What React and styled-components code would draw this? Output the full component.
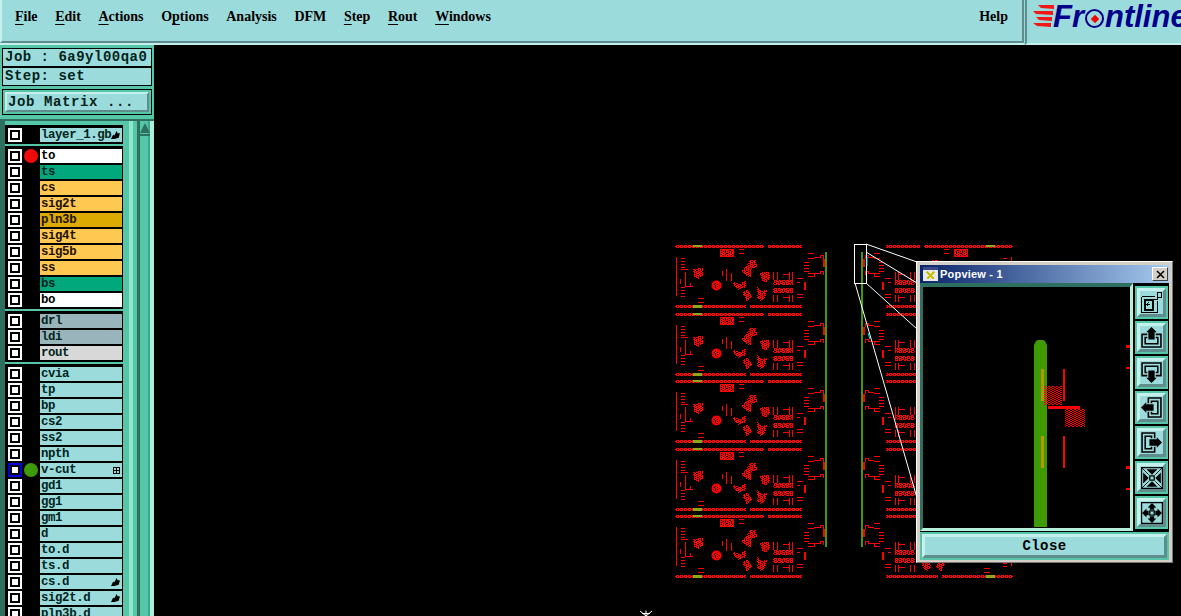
import React from "react";
import styled, { createGlobalStyle } from "styled-components";

const TEAL = "#9cdbdb";
const GREEN = "#55c6a8";
const DARK = "#2f6f5f";
const LIGHT = "#c6f0ec";
const INK = "#01241c";
const MONO = `"Liberation Mono", "DejaVu Sans Mono", monospace`;

const GlobalStyle = createGlobalStyle`
    html, body {
        margin: 0;
        background: #000;
        overflow: hidden;
    }
    *, *::before, *::after { box-sizing: border-box; }
`;

const Screen = styled.div`
    width: 1181px;
    height: 616px;
    display: flex;
    flex-direction: column;
    overflow: hidden;
    background: #000;
`;

/* top bar */
const TopBar = styled.div`
    height: 45px;
    flex: none;
    display: flex;
    background: ${TEAL};
`;

const MenuPanel = styled.div`
    width: 1024px;
    display: flex;
    justify-content: space-between;
    padding: 8px 14px 0 15px;
    border-left: 2px solid ${LIGHT};
    border-right: 2px solid #5f8d8d;
    border-bottom: 2px solid #5f8d8d;
    margin-bottom: 2px;
    box-shadow: 0 2px 0 ${LIGHT};
`;

const MenuList = styled.div`
    display: flex;
    gap: 17.6px;
    margin-left: -2px;
`;

const MenuItem = styled.span`
    font: bold 14px/17px "Liberation Serif", serif;
    color: #000;
`;

const Mnemonic = styled.span`
    text-decoration: underline;
    text-decoration-thickness: 1px;
    text-underline-offset: 3px;
`;

const LogoPanel = styled.div`
    flex: 1;
    margin-left: 1px;
    border-left: 2px solid #5f8d8d;
    border-bottom: 2px solid ${LIGHT};
    display: flex;
    align-items: flex-start;
    padding: 5px 0 0 6px;
    overflow: hidden;
`;

const LogoWord = styled.span`
    font: italic bold 31px/23px "Liberation Sans", sans-serif;
    color: #00008b;
    white-space: nowrap;
    display: flex;
    align-items: flex-end;
    margin-left: -1px;
`;

const LogoRing = styled.span`
    width: 19px;
    height: 19px;
    margin: 0 1px 0 1px;
    border: 2px solid #00008b;
    border-radius: 50%;
    display: flex;
    align-items: center;
    justify-content: center;

    &::after {
        content: "";
        width: 6px;
        height: 6px;
        background: #f00;
        transform: rotate(45deg);
    }
`;

/* body */
const Main = styled.div`
    flex: 1;
    min-height: 0;
    display: flex;
`;

const Sidebar = styled.div`
    width: 154px;
    flex: none;
    display: flex;
    flex-direction: column;
    background: ${GREEN};
    overflow: hidden;
    padding-top: 3px;
`;

const InfoBox = styled.div`
    height: 19px;
    margin: 0 2px 0 2px;
    padding-left: 2px;
    background: ${TEAL};
    border: 1px solid #000;
    font: bold 14px/17px ${MONO};
    letter-spacing: 0.5px;
    color: ${INK};
    white-space: nowrap;
`;

const MatrixBox = styled.div`
    margin: 3px 2px 4px;
    height: 26px;
    padding: 2px;
    border: 1px solid #000;
`;

const MatrixButton = styled.div`
    height: 20px;
    background: ${TEAL};
    border: 2px solid;
    border-color: ${LIGHT} #5f8d8d #5f8d8d ${LIGHT};
    font: bold 14px/16px ${MONO};
    letter-spacing: 0.6px;
    padding-left: 1px;
    color: ${INK};
`;

const ListArea = styled.div`
    flex: 1;
    min-height: 0;
    display: flex;
    border-top: 2px solid ${DARK};
`;

const LayerColumn = styled.div`
    width: 123px;
    flex: none;
    display: flex;
    flex-direction: column;
    gap: 2px;
    padding-top: 4px;
    border-left: 5px solid ${DARK};
`;

const LayerGroup = styled.div`
    background: #000;
    padding-top: 3px;
`;

const Row = styled.div`
    height: 16px;
    display: flex;
    padding-left: 3px;
`;

const CheckBox = styled.span`
    width: 14px;
    height: 14px;
    flex: none;
    background: ${(p) => (p.$active ? "#0000e0" : "#fff")};
    display: flex;
    align-items: center;
    justify-content: center;

    &::after {
        content: "";
        width: 10px;
        height: 10px;
        background: #fff;
        border: 2px solid #000;
    }
`;

const Dot = styled.span`
    width: 14px;
    height: 14px;
    margin: 0 2px 0 2px;
    flex: none;
    border-radius: 50%;
    background: ${(p) => p.$color || "transparent"};
`;

const Label = styled.span`
    width: 82px;
    height: 14px;
    flex: none;
    display: flex;
    justify-content: space-between;
    align-items: center;
    padding: 0 1px 0 1px;
    background: ${(p) => p.$bg || TEAL};
    color: ${(p) => p.$ink || INK};
    font: bold 12.4px/14px ${MONO};
    letter-spacing: -0.4px;
    white-space: nowrap;
    overflow: hidden;
`;

const ScrollTrack = styled.div`
    flex: 1;
    position: relative;
    background: linear-gradient(90deg,
        ${GREEN} 0 6px, #8fe6cc 6px 10px, ${GREEN} 10px 14px, ${DARK} 14px 17px,
        ${GREEN} 17px 25px, #3fa68c 25px 27px, #a8f0dc 27px 31px);
`;

const ScrollCap = styled.div`
    position: absolute;
    left: 17px;
    top: 1px;
    width: 10px;
    height: 14px;
    border-bottom: 2px solid ${DARK};

    &::after {
        content: "";
        position: absolute;
        left: 0;
        top: 1px;
        border-left: 5px solid transparent;
        border-right: 5px solid transparent;
        border-bottom: 10px solid ${DARK};
    }
`;

/* canvas */
const Canvas = styled.div`
    flex: 1;
    position: relative;
    background: #000;
`;

const BoardArt = styled.svg`
    display: block;
    width: 100%;
    height: 100%;
`;

const Popview = styled.div`
    position: absolute;
    left: 762px;
    top: 216px;
    width: 257px;
    height: 302px;
    padding: 3px;
    background: #d4d0c8;
    border: 1px solid;
    border-color: #fff #777 #777 #fff;
    display: flex;
    flex-direction: column;
`;

const TitleBar = styled.div`
    height: 18px;
    flex: none;
    display: flex;
    align-items: center;
    padding: 0 1px 0 3px;
    gap: 2px;
    background: linear-gradient(90deg, #0a246a, #a6caf0);
`;

const TitleText = styled.span`
    flex: 1;
    font: bold 11px/18px "Liberation Sans", sans-serif;
    letter-spacing: 0.2px;
    color: #fff;
`;

const WinClose = styled.span`
    width: 16px;
    height: 14px;
    background: #d4d0c8;
    border: 1px solid;
    border-color: #fff #404040 #404040 #fff;
    display: flex;
    align-items: center;
    justify-content: center;
`;

const PopBody = styled.div`
    flex: 1;
    min-height: 0;
    display: flex;
    flex-direction: column;
    background: #000;
`;

const ViewRow = styled.div`
    height: 248px;
    flex: none;
    display: flex;
`;

const ViewFrame = styled.div`
    width: 213px;
    flex: none;
    background: #000;
    border-style: solid;
    border-width: 4px 3px 3px 3px;
    border-color: ${DARK} #b8f0e0 #b8f0e0 ${DARK};
`;

const ToolColumn = styled.div`
    display: flex;
    flex-direction: column;
    gap: 2px;
    padding: 3px 0 0 2px;
`;

const ToolButton = styled.div`
    width: 33px;
    height: 33px;
    border: 2px solid ${GREEN};
    background: ${TEAL};
`;

const ToolFace = styled.div`
    width: 100%;
    height: 100%;
    border: 3px solid;
    border-color: ${LIGHT} #5f8d8d #5f8d8d ${LIGHT};
    display: flex;
    align-items: center;
    justify-content: center;
`;

const CloseWrap = styled.div`
    flex: 1;
    margin-top: 1px;
    padding: 2px;
    background: ${GREEN};
`;

const CloseButton = styled.div`
    height: 100%;
    background: ${TEAL};
    border: 3px solid;
    border-color: ${LIGHT} #5f8d8d #5f8d8d ${LIGHT};
    text-align: center;
    font: bold 14px/18px ${MONO};
    letter-spacing: 0.4px;
    color: #000;
`;

const ORANGE = "#ffc850";
const SEA = "#00a87c";

const groups = [
    [{ name: "layer_1.gb", mark: true }],
    [
        { name: "to", bg: "#fff", ink: "#000", dot: "#f00a0a" },
        { name: "ts", bg: SEA },
        { name: "cs", bg: ORANGE, ink: "#210" },
        { name: "sig2t", bg: ORANGE, ink: "#210" },
        { name: "pln3b", bg: "#dcaa00", ink: "#210" },
        { name: "sig4t", bg: ORANGE, ink: "#210" },
        { name: "sig5b", bg: ORANGE, ink: "#210" },
        { name: "ss", bg: ORANGE, ink: "#210" },
        { name: "bs", bg: SEA },
        { name: "bo", bg: "#fff", ink: "#000" },
    ],
    [
        { name: "drl", bg: "#9ab4bc" },
        { name: "ldi", bg: "#9ab4bc" },
        { name: "rout", bg: "#d8d8d8" },
    ],
    [
        { name: "cvia" }, { name: "tp" }, { name: "bp" }, { name: "cs2" }, { name: "ss2" },
        { name: "npth" },
        { name: "v-cut", dot: "#3f9a0a", active: true, grid: true },
        { name: "gd1" }, { name: "gg1" }, { name: "gm1" }, { name: "d" },
        { name: "to.d" }, { name: "ts.d" },
        { name: "cs.d", mark: true }, { name: "sig2t.d", mark: true }, { name: "pln3b.d" },
    ],
];

function HandMark() {
    return (
        <svg width="10" height="10" viewBox="0 0 9 9" style={{ flex: "none" }}>
            <path d="M0 8 L2 4 L3 5 L5 1 L6 3 L8 3 L7 7 L3 8 Z" fill="#000" />
        </svg>
    );
}

function GridMark() {
    return (
        <svg width="7" height="7" viewBox="0 0 7 7" style={{ marginRight: 1 }} shapeRendering="crispEdges">
            <path d="M.5.5h6v6h-6zM3.5 1v5M1 3.5h5" fill="none" stroke="#000" />
        </svg>
    );
}

// stipple is drawn cell by cell, svg patterns blur at odd offsets
const brick = (x, y, fill = 3) => (x + y * 2) % 4 < fill;
const cell = (x, y) => `M${x} ${y}h1v1h-1z`;

function hatchRect(x, y, w, h, fill) {
    let d = "";
    for (let j = y; j < y + h; j++) {
        for (let i = x; i < x + w; i++) {
            if (brick(i, j, fill)) d += cell(i, j);
        }
    }
    return d;
}

function inside(pts, x, y) {
    let hit = false;
    for (let i = 0, j = pts.length - 1; i < pts.length; j = i++) {
        const [xa, ya] = pts[i];
        const [xb, yb] = pts[j];
        if (ya > y !== yb > y && x < ((xb - xa) * (y - ya)) / (yb - ya) + xa) hit = !hit;
    }
    return hit;
}

function hatchPoly(pts) {
    let d = "";
    for (let j = 0; j < 72; j++) {
        for (let i = 0; i < 160; i++) {
            if (brick(i, j) && (i * 7 + j * 13) % 11 !== 0 && inside(pts, i + 0.5, j + 0.5)) d += cell(i, j);
        }
    }
    return d;
}

// one board, coords from the panel's top left corner (670,240)
const blobs = [
    [[23, 29], [33, 28], [33, 36], [28, 39], [24, 37]],
    [[76, 27], [80, 20], [86, 20], [87, 27], [81, 29], [81, 37], [76, 36], [72, 31]],
    [[90, 33], [99, 31], [100, 39], [96, 43], [92, 41]],
    [[63, 42], [70, 44], [76, 40], [76, 47], [69, 50], [64, 46]],
    [[73, 51], [78, 50], [82, 56], [77, 62], [75, 56], [73, 55]],
    [[87, 46], [92, 51], [97, 50], [95, 58], [91, 62], [87, 57]],
    [[103, 40], [123, 40], [123, 45], [103, 45]],
    [[103, 48], [123, 48], [123, 53], [103, 53]],
    [[51, 10], [63, 10], [63, 16], [51, 16]],
    [[43, 42], [50, 42], [50, 49], [43, 49]],
];

const boardStipple =
    hatchRect(5, 5, 89, 3) + hatchRect(98, 5, 34, 3) + hatchRect(5, 65, 71, 3) + hatchRect(80, 65, 52, 3) +
    blobs.map(hatchPoly).join("");

const boardLines =
    "M6.5 17V56 M11 18.5h4 M11 21.5h4 M11 24.5h4 M11 27.5h4 M11 47.5h4 M11 50.5h4 M11 53.5h4 M11 56.5h4" +
    " M11 29.5h7 M15.5 32v14h5v-3 M17 46.5h6 M10.5 39v5" +
    " M52.5 31v5 M56.5 29v12 M61.5 33v8" +
    " M103.5 32v8 M107.5 32v8 M119.5 32v8 M122.5 32v8 M103.5 55v7 M107.5 55v7 M119.5 55v7 M122.5 55v7 M113 34.5h6 M113 57.5h6" +
    " M28 58.5h6 M28 62.5h6 M69 9.5h5 M69 13.5h5" +
    " M134 22.5h5 M134 25.5h5 M134 28.5h5 M134 31.5h5 M138 13.5h6 M138 18.5h6 M144 17.5h6v-2h3v3" +
    " M138 33.5h6 M138 36.5h6v-3h6v-2h3v3 M127 38.5h6 M127 42.5h3 M127 54.5h6 M127 57.5h6";

const thickLines = "M154 19v8 M135 42v8";

function Board({ y }) {
    return (
        <g transform={`translate(670 ${y})`} shapeRendering="crispEdges">
            <path d={boardStipple} fill="#f00" />
            <rect x="23" y="5" width="9" height="2" fill="#8aa81c" />
            <rect x="23" y="65" width="9" height="3" fill="#8aa81c" />
            <path d="M50.5 9.5h13v7h-13z" fill="none" stroke="#f00" />
            <path d={boardLines} fill="none" stroke="#f00" />
            <path d={thickLines} fill="none" stroke="#f00" strokeWidth="2" />
            <circle cx="46.5" cy="45.5" r="4" fill="none" stroke="#f00" strokeWidth="2" shapeRendering="auto" />
        </g>
    );
}

const boardRows = [240, 308, 375, 443, 510];

function BoardSide() {
    return (
        <>
            {boardRows.map((y) => (
                <Board key={y} y={y} />
            ))}
            <rect x="825" y="252" width="2" height="295" fill="#3f9a0a" shapeRendering="crispEdges" />
        </>
    );
}

function CadView() {
    return (
        <BoardArt viewBox="154 45 1027 571">
            <BoardSide />
            <g transform="translate(1688 0) scale(-1 1)">
                <BoardSide />
            </g>
            <g fill="none" stroke="#fff">
                <path d="M854.5 244.5h12v39h-12z" shapeRendering="crispEdges" />
                <path d="M866 244 L917 262 M866 252 L917 283 M866 283 L917 329 M855 283 L917 498" />
            </g>
            <path d="M867 257v9 M868 333l2 6" stroke="#0ee" fill="none" />
            <path d="M646 610.5v6 M640 611l6 5 M652 611l-6 5 M642 613.5h8" stroke="#fff" fill="none" />
        </BoardArt>
    );
}

const popStipple = hatchRect(1044, 386, 18, 19, 2) + hatchRect(1065, 409, 20, 18, 2);

function PopArt() {
    return (
        <BoardArt viewBox="923 287 207 241">
            <path d="M1034 527V345l2-4 2-1h5l2 1 2 4V527Z" fill="#3f9a00" />
            <g shapeRendering="crispEdges">
                <path d={popStipple} fill="#f00" />
                <rect x="1041" y="369" width="3" height="32" fill="#b09a00" />
                <rect x="1041" y="436" width="3" height="32" fill="#b09a00" />
                <rect x="1063" y="369" width="2" height="32" fill="#f00" />
                <rect x="1063" y="436" width="2" height="32" fill="#f00" />
                <rect x="1048" y="406" width="32" height="3" fill="#f00" />
                <rect x="1126" y="345" width="4" height="3" fill="#f00" />
                <rect x="1126" y="367" width="4" height="2" fill="#f00" />
                <rect x="1126" y="466" width="4" height="3" fill="#f00" />
                <rect x="1126" y="488" width="4" height="2" fill="#f00" />
            </g>
        </BoardArt>
    );
}

function PanIcon({ turn }) {
    return (
        <svg width="21" height="21" viewBox="0 0 20 20">
            <g transform={`rotate(${turn} 10 10)`} fill="none" stroke="#000" strokeWidth="1.5">
                <path d="M6 7H1V19H19V7H14" />
                <path d="M6 10H4V16H16V10H14" />
                <path d="M10 0L15 5H13V12H7V5H5Z" fill="#000" stroke="none" />
            </g>
        </svg>
    );
}

function ZoomIcon() {
    return (
        <svg width="23" height="23" viewBox="0 0 23 23" shapeRendering="crispEdges">
            <g fill="none" stroke="#000">
                <path d="M1.5 5.5h13M1.5 5.5v16h16v-12" />
                <path d="M4.5 8.5h8v10h-8z" strokeWidth="2" />
                <path d="M17.5 1.5h4v5h-4z" />
                <path d="M12.5 8.5h5v-2" />
                <path d="M10 13.5h-3M8.5 11.5l-2 2 2 2" />
            </g>
        </svg>
    );
}

function FitIcon({ outward }) {
    const arrow = outward ? "M10 1L14 5H12V7H8V5H6Z" : "M10 7L15 2H5Z";
    return (
        <svg width="22" height="22" viewBox="0 0 20 20">
            <path d="M.5.5h19v19H.5z M8 8h4v4H8z" fill="none" stroke="#000" strokeWidth="1.2" />
            {[0, 90, 180, 270].map((r) => (
                <g key={r} transform={`rotate(${r} 10 10)`}>
                    <path d={arrow} fill="#000" />
                    {!outward && <path d="M1 1L7 7" stroke="#000" strokeWidth="0.8" />}
                </g>
            ))}
        </svg>
    );
}

const tools = [
    <ZoomIcon />,
    <PanIcon turn={0} />,
    <PanIcon turn={180} />,
    <PanIcon turn={-90} />,
    <PanIcon turn={90} />,
    <FitIcon />,
    <FitIcon outward />,
];

const menus = [
    ["", "F", "ile"],
    ["", "E", "dit"],
    ["", "A", "ctions"],
    ["O", "p", "tions"],
    ["Analysis", "", ""],
    ["DFM", "", ""],
    ["", "S", "tep"],
    ["", "R", "out"],
    ["", "W", "indows"],
];

export default function App() {
    return (
        <Screen>
            <GlobalStyle />
            <TopBar>
                <MenuPanel>
                    <MenuList>
                        {menus.map(([a, m, b]) => (
                            <MenuItem key={a + m + b}>
                                {a}
                                <Mnemonic>{m}</Mnemonic>
                                {b}
                            </MenuItem>
                        ))}
                    </MenuList>
                    <MenuItem>Help</MenuItem>
                </MenuPanel>
                <LogoPanel>
                    <svg width="21" height="23" viewBox="0 0 21 23" style={{ flex: "none" }}>
                        <path d="M5 0L21 0V4L8 3Z M0 6L20 6V10L3 9Z M3 12L19 12V16L6 15Z M0 18L18 18V22L4 21Z" fill="#f21818" />
                    </svg>
                    <LogoWord>
                        Fr
                        <LogoRing />
                        ntline
                    </LogoWord>
                </LogoPanel>
            </TopBar>
            <Main>
                <Sidebar>
                    <InfoBox>Job : 6a9yl00qa0</InfoBox>
                    <InfoBox>Step: set</InfoBox>
                    <MatrixBox>
                        <MatrixButton>Job Matrix ...</MatrixButton>
                    </MatrixBox>
                    <ListArea>
                        <LayerColumn>
                            {groups.map((rows) => (
                                <LayerGroup key={rows[0].name}>
                                    {rows.map((r) => (
                                        <Row key={r.name}>
                                            <CheckBox $active={r.active} />
                                            <Dot $color={r.dot} />
                                            <Label $bg={r.bg} $ink={r.ink}>
                                                {r.name}
                                                {r.mark && <HandMark />}
                                                {r.grid && <GridMark />}
                                            </Label>
                                        </Row>
                                    ))}
                                </LayerGroup>
                            ))}
                        </LayerColumn>
                        <ScrollTrack>
                            <ScrollCap />
                        </ScrollTrack>
                    </ListArea>
                </Sidebar>
                <Canvas>
                    <CadView />
                    <Popview>
                        <TitleBar>
                            <svg width="15" height="14" viewBox="0 0 15 14" shapeRendering="crispEdges">
                                <rect width="15" height="14" fill="#e8e8e8" />
                                <rect width="15" height="3" fill="#3a4a8a" />
                                <path d="M4 5l7 7M11 5l-7 7" stroke="#c8c000" strokeWidth="2" />
                            </svg>
                            <TitleText>Popview - 1</TitleText>
                            <WinClose>
                                <svg width="9" height="9" viewBox="0 0 9 9">
                                    <path d="M1 1l7 7M8 1l-7 7" stroke="#000" strokeWidth="1.6" />
                                </svg>
                            </WinClose>
                        </TitleBar>
                        <PopBody>
                            <ViewRow>
                                <ViewFrame>
                                    <PopArt />
                                </ViewFrame>
                                <ToolColumn>
                                    {tools.map((icon, i) => (
                                        <ToolButton key={i}>
                                            <ToolFace>{icon}</ToolFace>
                                        </ToolButton>
                                    ))}
                                </ToolColumn>
                            </ViewRow>
                            <CloseWrap>
                                <CloseButton>Close</CloseButton>
                            </CloseWrap>
                        </PopBody>
                    </Popview>
                </Canvas>
            </Main>
        </Screen>
    );
}
